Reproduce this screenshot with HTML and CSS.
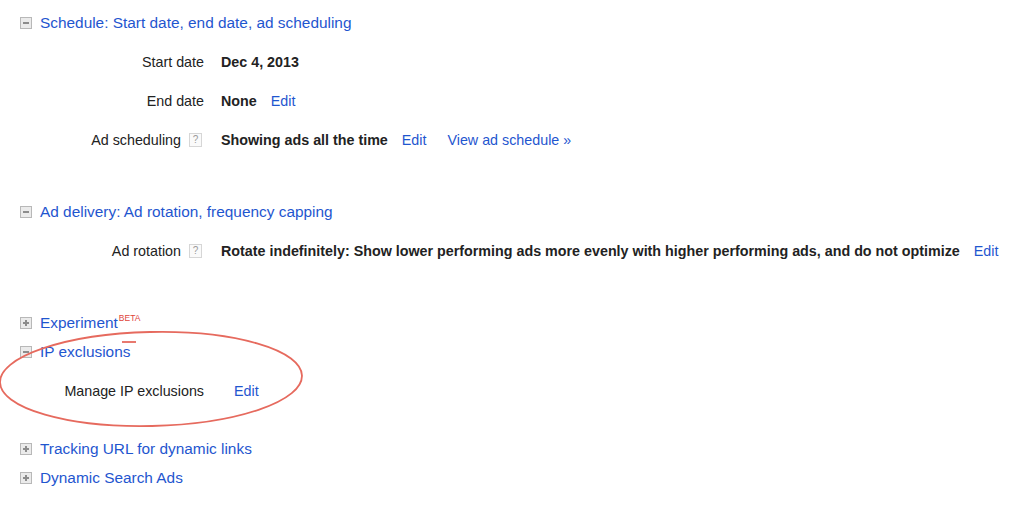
FILE: index.html
```html
<!DOCTYPE html>
<html>
<head>
<meta charset="utf-8">
<link rel="stylesheet" href="styles.css">
</head>
<body>
<div class="page">
  <section class="sec sec-open">
    <div class="hdr"><span class="tog tog-minus"></span><a class="hlink">Schedule: Start date, end date, ad scheduling</a></div>
    <div class="body">
      <div class="row"><div class="lbl">Start date</div><div class="val"><b>Dec 4, 2013</b></div></div>
      <div class="row"><div class="lbl">End date</div><div class="val"><b>None</b><a class="lnk">Edit</a></div></div>
      <div class="row"><div class="lbl">Ad scheduling<span class="help">?</span></div><div class="val"><b>Showing ads all the time</b><a class="lnk">Edit</a><a class="lnk lnk-wide">View ad schedule »</a></div></div>
    </div>
  </section>
  <section class="sec sec-open">
    <div class="hdr"><span class="tog tog-minus"></span><a class="hlink">Ad delivery: Ad rotation, frequency capping</a></div>
    <div class="body">
      <div class="row"><div class="lbl">Ad rotation<span class="help">?</span></div><div class="val"><b>Rotate indefinitely: Show lower performing ads more evenly with higher performing ads, and do not optimize</b><a class="lnk">Edit</a></div></div>
    </div>
  </section>
  <section class="sec">
    <div class="hdr"><span class="tog tog-plus"></span><a class="hlink">Experiment</a><sup class="beta">BETA</sup></div>
  </section>
  <section class="sec sec-open sec-ip">
    <div class="hdr"><span class="tog tog-minus"></span><a class="hlink">IP exclusions</a></div>
    <div class="body">
      <div class="row row-ip"><div class="lbl">Manage IP exclusions</div><div class="val"><a class="lnk lnk-first">Edit</a></div></div>
    </div>
  </section>
  <section class="sec">
    <div class="hdr"><span class="tog tog-plus"></span><a class="hlink">Tracking URL for dynamic links</a></div>
  </section>
  <section class="sec">
    <div class="hdr"><span class="tog tog-plus"></span><a class="hlink">Dynamic Search Ads</a></div>
  </section>

  <svg class="mark" width="1032" height="520" viewBox="0 0 1032 520">
    <ellipse cx="151" cy="379" rx="151" ry="47" transform="rotate(-1.3 151 379)" fill="none" stroke="#e66a5e" stroke-width="1.8"/>
    <line x1="122" y1="342" x2="136" y2="342" stroke="#e66a5e" stroke-width="1.8"/>
  </svg>
</div>
</body>
</html>
```
FILE: styles.css
```css
html, body {
  margin: 0;
  padding: 0;
  background: #fff;
}
body {
  font-family: "Liberation Sans", Arial, sans-serif;
  color: #222;
  font-size: 14.3px;
}
.page {
  position: relative;
  width: 1032px;
  height: 520px;
  padding-top: 8px;
  box-sizing: border-box;
  overflow: hidden;
}
.sec-open {
  margin-bottom: 38px;
}
.sec-open.sec-ip {
  margin-bottom: 24px;
}
.hdr {
  height: 29px;
  display: flex;
  align-items: center;
  padding-left: 20px;
}
.tog {
  width: 10px;
  height: 10px;
  border: 1px solid #b8b8b8;
  background: #ebebeb;
  margin-right: 8px;
  position: relative;
  flex: none;
}
.tog::before {
  content: "";
  position: absolute;
  left: 2px;
  right: 2px;
  top: 4px;
  height: 2px;
  background: #8c8c8c;
}
.tog-plus::after {
  content: "";
  position: absolute;
  top: 2px;
  bottom: 2px;
  left: 4px;
  width: 2px;
  background: #8c8c8c;
}
.hlink {
  color: #1f56cf;
  font-size: 15.4px;
}
.beta {
  color: #e0443a;
  font-size: 8.5px;
  align-self: flex-start;
  margin-top: 5px;
  margin-left: 1px;
}
.body {
  padding-top: 5px;
}
.row {
  height: 39px;
  display: flex;
  align-items: center;
}
.lbl {
  width: 204px;
  flex: none;
  display: flex;
  justify-content: flex-end;
  align-items: center;
}
.val {
  padding-left: 17px;
  display: flex;
  align-items: center;
  white-space: nowrap;
}
.row-ip .val {
  padding-left: 30px;
}
.val b {
  font-weight: bold;
  color: #222;
}
.lnk {
  color: #1f56cf;
  margin-left: 14px;
}
.lnk-wide {
  margin-left: 21px;
}
.lnk-first {
  margin-left: 0;
}
.help {
  width: 11px;
  height: 12px;
  border: 1px solid #d6d6d6;
  background: #fafafa;
  color: #9a9a9a;
  font-size: 10px;
  line-height: 12px;
  text-align: center;
  margin-left: 8px;
  margin-right: 2px;
}
.mark {
  position: absolute;
  left: 0;
  top: 0;
  pointer-events: none;
}
```
